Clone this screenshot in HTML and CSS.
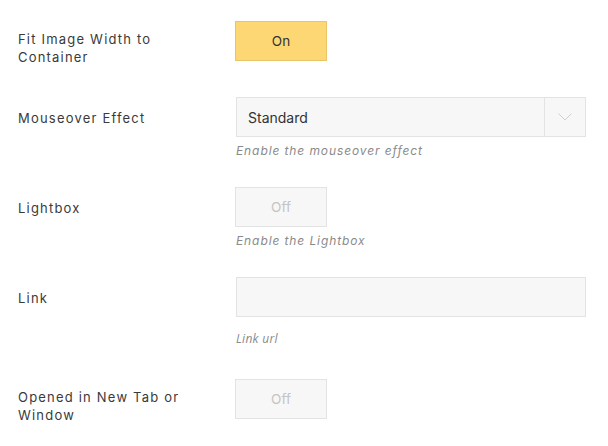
FILE: index.html
```html
<!DOCTYPE html>
<html>
<head>
<meta charset="utf-8">
<link rel="stylesheet" href="styles.css">
</head>
<body>
<div class="form">
  <div class="row row-first">
    <div class="label label-two">Fit Image Width to<br>Container</div>
    <div class="control">
      <div class="toggle toggle-on">On</div>
    </div>
  </div>
  <div class="row">
    <div class="label">Mouseover Effect</div>
    <div class="control">
      <div class="select">
        <span class="select-value">Standard</span>
        <span class="select-arrow">
          <svg width="14" height="8" viewBox="0 0 14 8"><path d="M0.5 0.5 L7 7 L13.5 0.5" fill="none" stroke="#d0d0d0" stroke-width="1"/></svg>
        </span>
      </div>
      <div class="hint">Enable the mouseover effect</div>
    </div>
  </div>
  <div class="row">
    <div class="label">Lightbox</div>
    <div class="control">
      <div class="toggle">Off</div>
      <div class="hint">Enable the Lightbox</div>
    </div>
  </div>
  <div class="row row-link">
    <div class="label">Link</div>
    <div class="control">
      <div class="input"></div>
      <div class="hint hint-link">Link url</div>
    </div>
  </div>
  <div class="row">
    <div class="label label-two">Opened in New Tab or<br>Window</div>
    <div class="control">
      <div class="toggle">Off</div>
    </div>
  </div>
</div>
</body>
</html>
```
FILE: styles.css
```css
html, body {
  margin: 0;
  padding: 0;
  background: #ffffff;
}
.form {
  padding: 21px 0 0 18px;
  font-family: Inter, "Liberation Sans", sans-serif;
  color: #333333;
}
.row {
  display: flex;
  align-items: flex-start;
  margin-bottom: 28px;
}
.row-first {
  margin-bottom: 31px;
}
.row-link {
  margin-bottom: 32px;
}
.label {
  width: 217px;
  flex: none;
  font-size: 13px;
  line-height: 18px;
  letter-spacing: 1.2px;
  padding-top: 12px;
  color: #3a3a3a;
}
.label-two {
  padding-top: 9px;
}
.control {
  width: 351px;
  flex: none;
}
.toggle {
  box-sizing: border-box;
  width: 92px;
  height: 40px;
  border: 1px solid #e3e3e3;
  background: #f7f7f7;
  color: #c4c4c4;
  font-size: 13.5px;
  display: flex;
  align-items: center;
  justify-content: center;
}
.toggle-on {
  background: #fed775;
  border-color: #e9c469;
  color: #333333;
}
.select {
  box-sizing: border-box;
  margin-left: 1px;
  width: 350px;
  height: 40px;
  border: 1px solid #e3e3e3;
  background: #f7f7f7;
  display: flex;
  align-items: center;
}
.select-value {
  flex: 1;
  padding-left: 11px;
  font-size: 14px;
  color: #333333;
}
.select-arrow {
  width: 40px;
  height: 100%;
  border-left: 1px solid #e3e3e3;
  display: flex;
  align-items: center;
  justify-content: center;
}
.input {
  box-sizing: border-box;
  margin-left: 1px;
  width: 350px;
  height: 40px;
  border: 1px solid #e3e3e3;
  background: #f7f7f7;
}
.hint {
  margin-top: 6px;
  margin-left: 1px;
  font-size: 12px;
  line-height: 16px;
  font-style: italic;
  letter-spacing: 0.9px;
  color: #8a8a8a;
}
.hint-link {
  margin-top: 14px;
  font-family: "Open Sans", sans-serif;
  letter-spacing: 0.3px;
}
```
